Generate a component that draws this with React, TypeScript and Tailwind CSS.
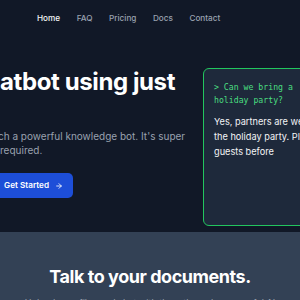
import { ArrowRight } from "lucide-react";

function Line({ pre, rest, w }: { pre: string; rest: string; w: string }) {
  return (
    <div className="flex whitespace-nowrap">
      <span className={`${w} shrink-0 flex justify-end`}>{pre}</span>
      <span>{rest}</span>
    </div>
  );
}

export default function App() {
  return (
    <div className="w-[300px] h-[300px] overflow-hidden bg-[#111827] font-['Inter','Noto_Sans',sans-serif]">
      {/* Nav */}
      <nav className="h-9 flex items-center pl-[37px] gap-[16.5px] text-[8.2px] font-medium">
        <a className="text-gray-100">Home</a>
        <a className="text-gray-400">FAQ</a>
        <a className="text-gray-400">Pricing</a>
        <a className="text-gray-400">Docs</a>
        <a className="text-gray-400">Contact</a>
      </nav>

      {/* Hero */}
      <section className="h-[196px] flex items-start gap-4 pt-8 ml-[-207px]">
        <div className="w-[394px] shrink-0">
          <h1 className="text-[24px] leading-[28px] font-bold tracking-[-0.4px] text-white">
            <Line w="w-[207px]" pre="Build a custom ch" rest="atbot using just" />
            <Line w="w-[207px]" pre="your data." rest="" />
          </h1>
          <div className="mt-[5px] text-[10px] leading-[14px] text-gray-400">
            <Line
              w="w-[205px]"
              pre="Empower your team and customers with su"
              rest="ch a powerful knowledge bot. It's super"
            />
            <Line
              w="w-[207px]"
              pre={"easy to use and set up in a minute, no coding\u00a0"}
              rest="required."
            />
          </div>
          <div className="mt-4 flex items-center gap-2">
            <input
              className="w-[187px] h-[25px] rounded-md bg-gray-800 border border-gray-700 px-2 text-[9px] text-gray-300"
              placeholder="Enter your email"
            />
            <button className="h-[25px] flex items-center gap-[6px] rounded-[5px] bg-[#1d4ed8] pl-4 pr-[10px] text-[8.2px] font-semibold text-white">
              Get Started
              <ArrowRight size={8} strokeWidth={2.5} />
            </button>
          </div>
        </div>

        <div className="w-[150px] h-[158px] shrink-0 rounded-[6px] border-[1.5px] border-[#22c55e] bg-[#1e293b] px-[10px] pt-3">
          <div className="font-['DejaVu_Sans_Mono',monospace] text-[8.2px] leading-[13px] text-[#4ade80] whitespace-nowrap">
            &gt; Can we bring a
            <br />
            holiday party?
          </div>
          <div className="mt-[7px] text-[9.2px] leading-[15px] text-gray-100 whitespace-nowrap">
            Yes, partners are welcome at
            <br />
            the holiday party. Please RSVP with
            <br />
            guests before
          </div>
        </div>
      </section>

      {/* Lower section */}
      <section className="bg-[#334155] pt-[34px] pb-10 flex flex-col items-center text-center">
        <h2 className="text-[18px] leading-[22px] font-bold tracking-tight text-white">
          Talk to your documents.
        </h2>
        <p className="mt-[8px] w-[270px] text-[9px] leading-[13px] text-gray-400">
          Upload your files and chat with them through a powerful AI knowledge bot trained on your own content.
        </p>
      </section>
    </div>
  );
}
